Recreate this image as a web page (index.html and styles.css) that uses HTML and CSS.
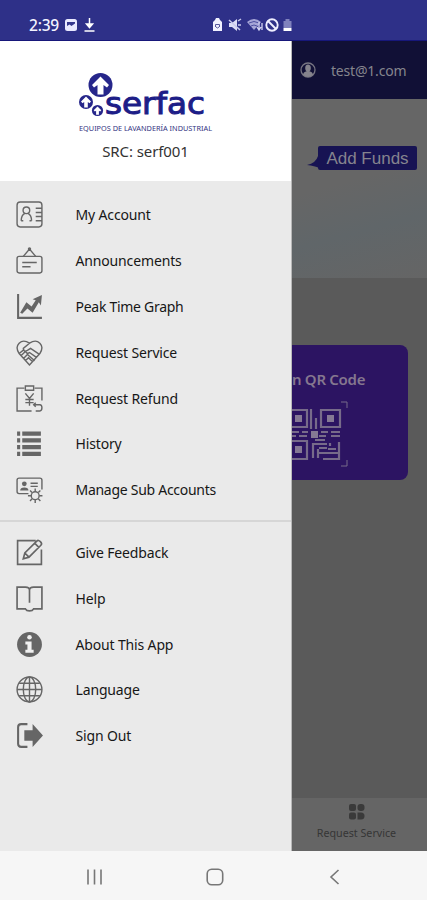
FILE: index.html
```html
<!DOCTYPE html>
<html lang="en">
<head>
<meta charset="utf-8">
<meta name="viewport" content="width=device-width, initial-scale=1">
<title>Serfac</title>
<link rel="stylesheet" href="styles.css">
</head>
<body>
<div class="phone">
  <header class="status">
    <span class="clock">2:39</span>
    <svg class="status-left" width="34" height="16" viewBox="0 0 34 16">
      <rect x="1" y="2" width="12" height="12" rx="2.500" fill="#e9e9ff"/>
      <path d="M3 5h8v6H3z" fill="#35378d"/><path d="M3 11V9l2.500-1.500 2 1.500L11 6.500V11z" fill="#e9e9ff"/>
      <path d="M25.500 1v8M22.500 7l3 3.500 3-3.500zM20.500 14h10" fill="#fff" stroke="#fff" stroke-width="1.500"/>
    </svg>
    <svg class="status-right" width="82" height="16" viewBox="0 0 82 16">
      <path d="M1 5l2-2 1-2h3l1 2 2 2v9H1z" fill="#f1f1ff"/><path d="M3.500 10V7.500h4V10M4 10l1.500 1L7 10" fill="none" stroke="#55579d"/>
      <path d="M17 6h3l5-4v12l-5-4h-3z" fill="#ddddf6"/><path d="M17 3l11 10M26 4l3-2M26 8h3M26 11l2 2" stroke="#c9c9ec" stroke-width="1.500"/>
      <path d="M35 5q7-6 14 0l-7 8z" fill="#a6a6d7"/><path d="M37 6q5-3 10 0M39 9q3-2 6 0" fill="none" stroke="#4d4f9f"/><path d="M47 5v7M45 10l2 3 2-3M50 13V6" fill="none" stroke="#d6d6f4" stroke-width="1.300"/>
      <circle cx="60" cy="8" r="5.700" fill="none" stroke="#eeeeff" stroke-width="1.900"/><path d="M56 4l8 8" stroke="#eeeeff" stroke-width="1.900"/>
      <path d="M71.500 4h2V2h4v2h2v7h-8z" fill="#8082bd"/><path d="M71.500 11h8v3h-8z" fill="#fff"/>
    </svg>
  </header>

  <div class="stage">
    <aside class="drawer">
      <div class="brand">
        <svg class="logo" width="136" height="64" viewBox="0 0 136 64">
          <g fill="#26268a">
            <circle cx="22.500" cy="14" r="12"/>
            <circle cx="8" cy="31" r="7"/>
            <circle cx="19.500" cy="39.500" r="5.600"/>
          </g>
          <g fill="#fff">
            <path d="M22.500 5.500l8.500 8.500-2 2.500-3.500-2.500v9.500h-6V14L16 16.500 14 14z"/>
            <path d="M8 25.500l5 5-1.500 1.700-1.700-1.200v5.500H6.200V31l-1.700 1.200L3 30.500z"/>
            <path d="M19.500 35.500l3.800 3.800-1.200 1.200-1.200-.8v4.100h-2.800v-4.100l-1.200.8-1.200-1.200z"/>
          </g>
          <text class="wordmark" x="27" y="43" textLength="100" lengthAdjust="spacingAndGlyphs">serfac</text>
          <text class="tagline" x="1" y="60" textLength="133" lengthAdjust="spacingAndGlyphs">EQUIPOS DE LAVANDERÍA INDUSTRIAL</text>
        </svg>
        <div class="src">SRC: serf001</div>
      </div>

      <ul class="menu">
        <li><svg viewBox="0 0 28 28"><rect x="2" y="2" width="24" height="24" rx="3"/><circle cx="11" cy="10" r="3.200"/><path d="M6 20q0-5 3.500-7M16 20q0-5-3.500-7M6 20h2M14 20h2M20 8h6M20 12h6M20 16h6M20 20h6"/></svg><span>My Account</span></li>
        <li><svg viewBox="0 0 28 28"><rect x="2" y="10" width="24" height="16" rx="2"/><path d="M8 10l6-7 6 7M7 16h14M7 20h8"/><circle cx="14" cy="3" r="1"/></svg><span>Announcements</span></li>
        <li><svg viewBox="0 0 28 28"><path d="M3 2v23h23" stroke-width="2"/><path class="solid" d="M5 20l6-10 5 4 4-6-3-1 9-4-1 10-2-3-6 10-5-4-5 5z"/></svg><span class="w108">Peak Time Graph</span></li>
        <li><svg viewBox="0 0 28 28"><path d="M14 26L4 15Q0 9 4 5t10 0q6-4 10 0t0 10zM14 5L8 10q0 4 4 2l3-2 9 6M4 15l5-4M6 17l4-4 2 2 2-1 7 5M8 20l4-4 7 6M10 22l3-3 4 4"/></svg><span>Request Service</span></li>
        <li><svg viewBox="0 0 28 28"><path d="M9 4H2v22h14M19 4h7v12M10 2h8v4h-8zM10 9l4 5 4-5M14 14v7M10 15h8M10 18h8M18 20h6q2 0 2 3t-2 3h-4M20 18l-2 2 2 2"/></svg><span>Request Refund</span></li>
        <li><svg viewBox="0 0 28 28"><path d="M2 4.500h3M7 4.500h18M2 11h3M7 11h18M2 17.500h3M7 17.500h18M2 24h3M7 24h18" stroke-width="4"/></svg><span>History</span></li>
        <li><svg viewBox="0 0 28 28"><path d="M13 18H4q-2 0-2-2V5q0-2 2-2h20q2 0 2 2v9M15 8h7M15 11h7"/><path class="solid" d="M5 15q0-3 4-3t4 3z"/><circle class="solid" cx="9" cy="8.500" r="2.300"/><circle cx="19.500" cy="20" r="3.800"/><path d="M19.500 13v3M19.500 24v3M12.500 20h3M23.500 20h3M14.500 15l2 2M22.500 23l2 2M24.500 15l-2 2M16.500 23l-2 2"/></svg><span class="w108">Manage Sub Accounts</span></li>
      </ul>
      <hr>
      <ul class="menu">
        <li><svg viewBox="0 0 28 28"><path d="M20 2.500H2.500v23h23V11M8 20l1.500-5.500L21 3q1.500-1.500 3.500.5t.5 3.500L13.500 18.500zM9.500 14.500l4 4M19 5l4 4" stroke-width="1.600"/></svg><span>Give Feedback</span></li>
        <li><svg viewBox="0 0 28 28"><path d="M2 3h8q4 0 4 3 0-3 4-3h8v21h-8q-1 2-4 2t-4-2H2zM14 6v12" stroke-width="1.600"/></svg><span>Help</span></li>
        <li><svg viewBox="0 0 28 28"><circle class="solid" cx="14" cy="14" r="12"/><circle class="light" cx="14" cy="7" r="2.200"/><path class="light" d="M10 11h6v8h2v3h-8v-3h2v-5h-2z"/></svg><span>About This App</span></li>
        <li><svg viewBox="0 0 28 28"><circle cx="14" cy="14" r="12"/><ellipse cx="14" cy="14" rx="6" ry="12"/><path d="M14 2v24M2 14h24M4 8h20M4 20h20"/></svg><span>Language</span></li>
        <li><svg viewBox="0 0 28 28"><path d="M12 3H6Q3 3 3 6v16q0 3 3 3h6" stroke-width="2"/><path class="solid" d="M9 9h8V3l10 11-10 11v-6H9z"/></svg><span>Sign Out</span></li>
      </ul>
    </aside>

    <main class="page">
      <div class="userbar">
        <svg width="16" height="16" viewBox="0 0 16 16"><circle cx="8" cy="8" r="7" fill="none" stroke="#777582" stroke-width="1.300"/><ellipse cx="8" cy="6" rx="2.800" ry="3.500" fill="#85838d"/><path d="M3 13q0-3 4-4h2q4 1 4 4-5 4-10 0" fill="#85838d"/></svg>
        <span>test@1.com</span>
      </div>
      <section class="funds">
        <svg width="12" height="12" viewBox="0 0 12 12"><path d="M12 0v12q-4-2-12-3 9-2 11-9z" fill="#171353"/></svg>
        <span class="funds-button">Add Funds</span>
      </section>
      <section class="content">
        <div class="qr-card">
          <div class="qr-title">n QR Code</div>
          <svg class="qr" width="60" height="70" viewBox="0 0 60 70">
            <g fill="none" stroke="#776b8a" stroke-width="2.200">
              <path d="M-1 10h16v17H-1M29 10h19v17H29zM-1 41h16v18H-1M19 9v20M24 18v11M0 32h7M10 32h6M29 32h7M39 32h9M0 36h4M7 36h8M27 36h7M39 36h9M23 40h10M21 58V44h14M26 49v9M27 48h8M38 43v3M47 42v17H31M27 53h20M36 49h8"/>
              <path d="M49 2h6v6M49 66h6v-6" stroke-width="1"/>
            </g>
            <g fill="#857994"><path d="M3 15h7v7H3zM35 15h7v7h-7zM3 46h7v7H3zM19 31h7v7h-7z"/></g>
          </svg>
        </div>
      </section>
      <footer class="tab">
        <svg width="16" height="16" viewBox="0 0 16 16" fill="#3a3a3a"><rect x="0" y="0" width="7" height="7" rx="2"/><rect x="8.500" y="0" width="7" height="7" rx="3"/><rect x="0" y="8.500" width="7" height="7" rx="2"/><path d="M8.500 8.500H12q3.500 0 3.500 3.500T12 15.500H8.500z"/></svg>
        <span>Request Service</span>
      </footer>
    </main>
  </div>

  <nav class="navbar">
    <svg width="18" height="18" viewBox="0 0 18 18"><path d="M2 1.500v15M8.500 1.500v15M15 1.500v15"/></svg>
    <svg width="18" height="18" viewBox="0 0 18 18"><rect x="1.200" y="1.200" width="15.500" height="15.500" rx="4.500"/></svg>
    <svg width="18" height="18" viewBox="0 0 18 18"><path d="M12.500 2L5 9l7.500 7"/></svg>
  </nav>
</div>
</body>
</html>
```
FILE: styles.css
```css
* { box-sizing: border-box; }
body { margin: 0; font-family: "Noto Sans", sans-serif; color: #171717; }
.phone { width: 427px; height: 900px; display: flex; flex-direction: column; overflow: hidden; }
.status { height: 41px; flex: none; background: #2e3088; border-bottom: 1px solid #17177a; display: flex; align-items: center; padding: 10px 0 0 29px; color: #f3f3ff; }
.clock { font-size: 15.5px; font-weight: 500; width: 35px; letter-spacing: -0.2px; line-height: 16px; }
.status-right { margin-left: 114px; }
.stage { flex: 1; display: flex; min-height: 0; }
.drawer { width: 292px; flex: none; background: #eaeaea; border-right: 1px solid #b8b8b8; }
.brand { height: 140px; background: #fff; display: flex; flex-direction: column; align-items: center; padding-top: 30px; }
.logo { display: block; overflow: visible; }
.wordmark { font: 400 30px "DejaVu Sans", sans-serif; fill: #1d1d87; stroke: #1d1d87; stroke-width: 1; }
.tagline { font: 6.5px "Noto Sans", sans-serif; fill: #33337f; }
.src { font-size: 15px; line-height: 20px; margin-top: 6px; letter-spacing: -0.1px; color: #333; }
.menu { list-style: none; margin: 0; padding: 0; }
.brand + .menu { padding-top: 11px; }
.menu li { height: 45.8px; display: flex; align-items: center; padding-left: 15px; font-size: 14px; letter-spacing: -0.15px; }
.menu .w108 { letter-spacing: -0.28px; }
.menu svg { width: 29px; height: 29px; margin-right: 31.5px; fill: none; stroke: #666; stroke-width: 1.35; flex: none; }
.menu .solid { fill: #666; stroke: none; }
.menu .light { fill: #f0f0f0; stroke: none; }
hr { border: 0; height: 2px; background: #d6d6d6; margin: 7px 0 8px; }
.page { flex: 1; display: flex; flex-direction: column; background: #5a5a5a; min-width: 0; }
.userbar { height: 58px; background: #111036; display: flex; align-items: center; padding-left: 8px; gap: 15px; color: #85858d; font-size: 14px; letter-spacing: -0.2px; }
.funds { height: 179px; background: linear-gradient(165deg, #666 45%, #606669 70%, #656565); display: flex; align-items: flex-start; padding: 47px 0 0 15px; }
.funds svg { margin-top: 10px; }
.funds-button { width: 99px; height: 24px; background: #171353; border-radius: 2px; color: #85838e; font: 17px/25px "Liberation Sans", sans-serif; text-align: center; margin-left: -1px; }
.content { flex: 1; padding-top: 67px; }
.qr-card { width: 116px; height: 135px; background: #2c1462; border-radius: 0 8px 8px 0; padding-top: 23px; }
.qr-title { font-size: 15px; line-height: 22px; font-weight: 600; letter-spacing: -0.3px; color: #85778f; white-space: nowrap; }
.qr { display: block; margin-top: 10px; }
.tab { height: 53px; background: #656565; display: flex; flex-direction: column; align-items: center; padding: 6px 6px 0 0; color: #353535; font-size: 10.7px; line-height: 15px; gap: 6px; }
.navbar { height: 49px; flex: none; background: #f6f6f6; display: flex; align-items: center; justify-content: space-between; padding: 3px 83px 0 86px; }
.navbar svg { fill: none; stroke: #777; stroke-width: 1.6; }
```
